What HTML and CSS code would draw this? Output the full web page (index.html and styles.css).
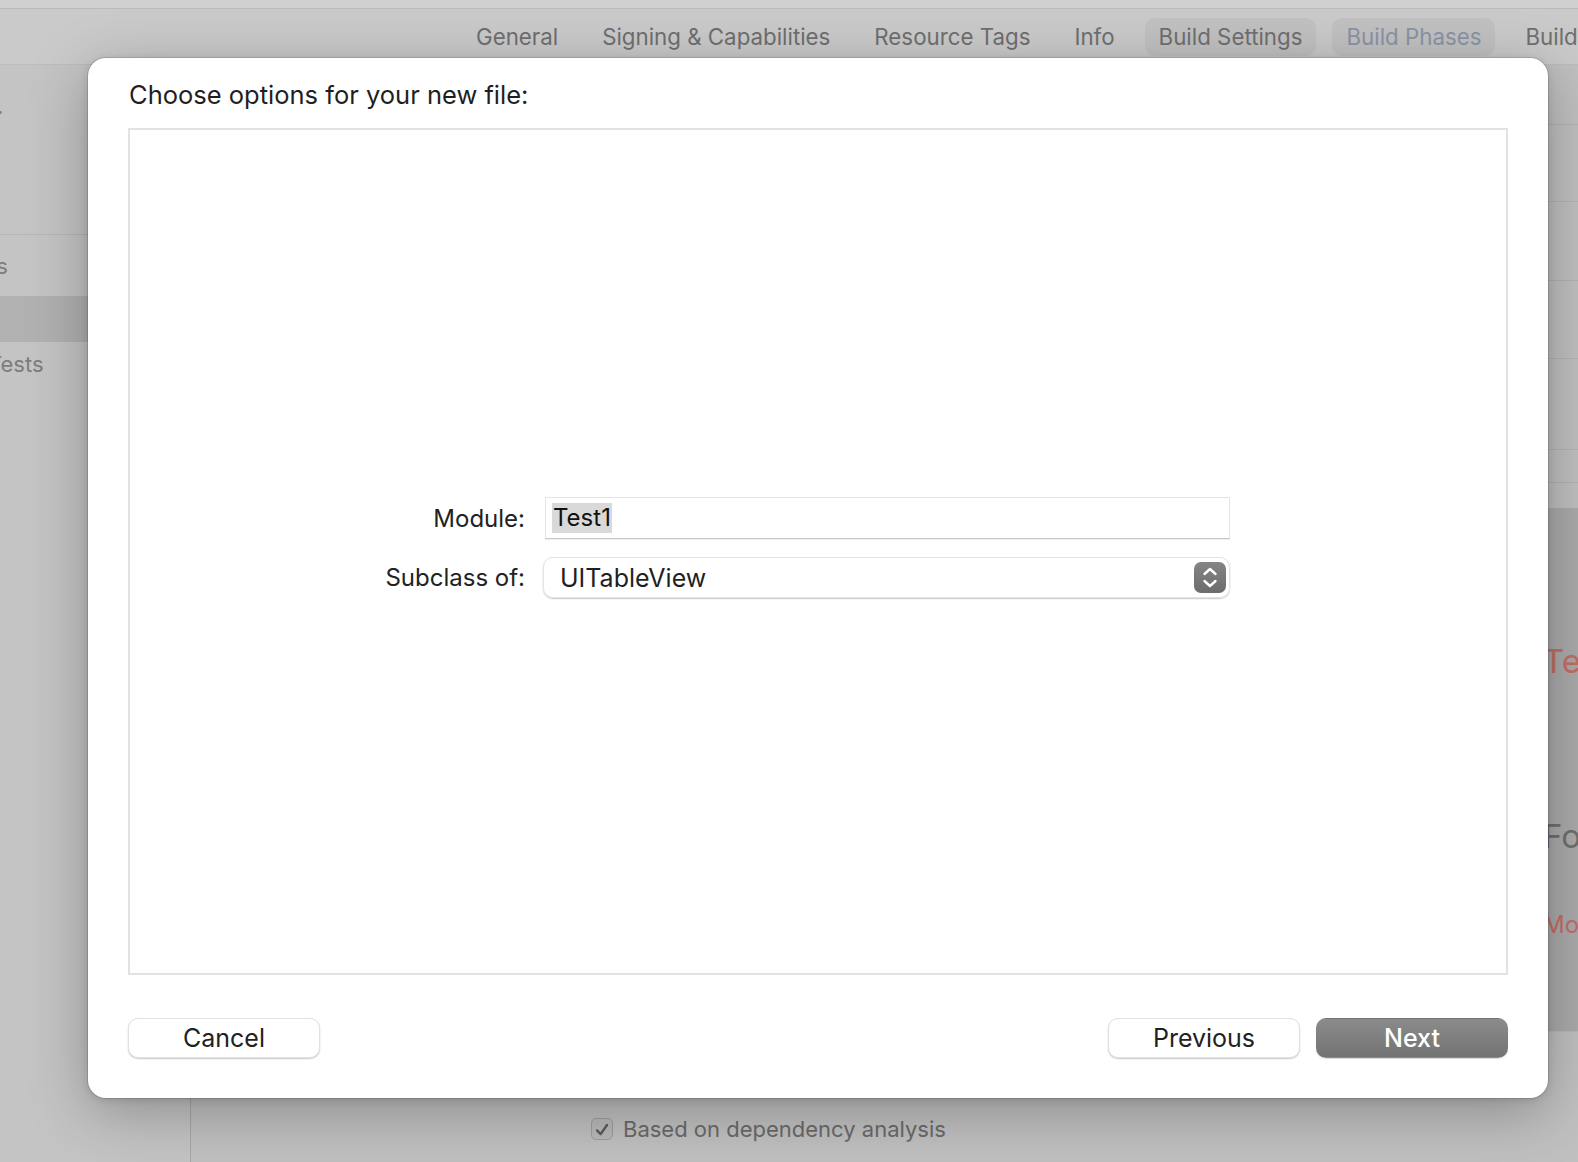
FILE: index.html
```html
<!DOCTYPE html>
<html lang="en">
<head>
<meta charset="utf-8">
<title>Choose options for your new file</title>
<link rel="stylesheet" href="styles.css">
</head>
<body>
<div class="app">
  <div class="titlebar"></div>
  <header class="toolbar">
    <nav class="tabs">
      <span class="tab">General</span>
      <span class="tab">Signing &amp; Capabilities</span>
      <span class="tab">Resource Tags</span>
      <span class="tab">Info</span>
      <span class="tab pill">Build Settings</span>
      <span class="tab pill active">Build Phases</span>
      <span class="tab">Build Rules</span>
    </nav>
  </header>
  <div class="workspace">
    <aside class="sidebar">
      <div class="side-group"><span class="side-text dot">.</span></div>
      <div class="side-row"><span class="side-text cut-s">Targets</span></div>
      <div class="side-row selected"></div>
      <div class="side-row short"><span class="side-text cut-t">Tests</span></div>
    </aside>
    <main class="main">
      <div class="phase-row h60"></div>
      <div class="phase-row h77"></div>
      <div class="phase-row h79"></div>
      <div class="phase-row h78"></div>
      <div class="phase-row h91"></div>
      <div class="phase-row h33"></div>
      <div class="phase-gap"></div>
      <div class="phase-block">
        <div class="block-line red big">Test1</div>
        <div class="block-line grey big">Foundation</div>
        <div class="block-line red small">Module</div>
      </div>
      <div class="check-row">
        <span class="checkbox">
          <svg viewBox="0 0 22 22" width="22" height="22"><path d="M5.5 11.5 L9.5 15.5 L16.5 5.5" fill="none" stroke="#5a5a5a" stroke-width="2.6" stroke-linecap="round" stroke-linejoin="round"/></svg>
        </span>
        <span class="check-label">Based on dependency analysis</span>
      </div>
    </main>
  </div>

  <section class="sheet">
    <h1 class="sheet-title">Choose options for your new file:</h1>
    <div class="options-box">
      <div class="form">
        <label class="form-label">Module:</label>
        <div class="text-field"><span class="selection">Test1</span></div>
        <label class="form-label">Subclass of:</label>
        <div class="popup">
          <span class="popup-value">UITableView</span>
          <span class="stepper">
            <svg viewBox="0 0 32 31" width="32" height="31">
              <defs>
                <linearGradient id="sg" x1="0" y1="0" x2="0" y2="1">
                  <stop offset="0" stop-color="#858585"/>
                  <stop offset="1" stop-color="#6c6c6c"/>
                </linearGradient>
              </defs>
              <rect x="0" y="0" width="32" height="31" rx="7" fill="url(#sg)"/>
              <path d="M10.5 12 L16 7 L21.5 12" fill="none" stroke="#fff" stroke-width="2.4" stroke-linecap="round" stroke-linejoin="round"/>
              <path d="M10.5 19 L16 24 L21.5 19" fill="none" stroke="#fff" stroke-width="2.4" stroke-linecap="round" stroke-linejoin="round"/>
            </svg>
          </span>
        </div>
      </div>
    </div>
    <div class="sheet-buttons">
      <button class="btn">Cancel</button>
      <div class="btn-group">
        <button class="btn">Previous</button>
        <button class="btn primary">Next</button>
      </div>
    </div>
  </section>
</div>
</body>
</html>
```

FILE: styles.css
```css
* { box-sizing: border-box; }
html, body { margin: 0; padding: 0; }
body {
  font-family: Inter, "Noto Sans", sans-serif;
  background: #c1c1c1;
  overflow: hidden;
}
.app {
  position: relative;
  width: 1578px;
  height: 1162px;
  display: flex;
  flex-direction: column;
  background: linear-gradient(180deg, #c6c6c6 0%, #bdbdbd 100%);
  overflow: hidden;
}
.titlebar {
  height: 9px;
  background: #d0d0d0;
  border-bottom: 1px solid #bababa;
  flex: none;
}
.toolbar {
  height: 56px;
  flex: none;
  background: #cacaca;
  border-bottom: 1px solid #bcbcbc;
  display: flex;
  align-items: flex-start;
  padding-left: 462px;
  padding-top: 9px;
}
.tabs {
  display: flex;
  gap: 16px;
  white-space: nowrap;
}
.tab {
  font-size: 22.3px;
  color: #6f6f6f;
  height: 38px;
  line-height: 38px;
  padding: 0 14px;
  border-radius: 10px;
}
.tab.pill { background: #c1c1c1; }
.tab.active { color: #8a93a6; }

.workspace {
  flex: 1;
  display: flex;
  min-height: 0;
}
.sidebar {
  width: 191px;
  flex: none;
  border-right: 1px solid #a8a8a8;
  background: #c4c4c4;
  display: flex;
  flex-direction: column;
}
.side-group {
  height: 170px;
  border-bottom: 1px solid #b6b6b6;
  padding-top: 28px;
}
.side-row {
  height: 61px;
  display: flex;
  align-items: center;
}
.side-row.selected {
  height: 46px;
  background: #b1b1b1;
}
.side-row.short { height: 43px; }
.side-text {
  font-size: 22px;
  color: #7d7d7d;
  white-space: nowrap;
}
.dot { display: block; margin-left: -3px; }
.cut-s { margin-left: -70px; }
.cut-t { margin-left: -12px; }

.main {
  flex: 1;
  display: flex;
  flex-direction: column;
  background: #c0c0c0;
}
.phase-row { border-bottom: 1px solid #b3b3b3; flex: none; }
.h60 { height: 60px; }
.h77 { height: 77px; }
.h79 { height: 79px; }
.h78 { height: 78px; }
.h91 { height: 91px; }
.h33 { height: 33px; }
.phase-gap { height: 25px; flex: none; }
.phase-block {
  height: 524px;
  flex: none;
  background: #ababab;
  border-bottom: 1px solid #b8b8b8;
  padding-left: 1352px;
  padding-top: 133px;
  display: flex;
  flex-direction: column;
}
.block-line { white-space: nowrap; }
.block-line.big { font-size: 33px; height: 40px; line-height: 40px; }
.block-line.small { font-size: 24px; height: 30px; line-height: 30px; }
.block-line.red { color: #c46d66; }
.block-line.grey { color: #6f6f6f; margin-top: 135px; }
.block-line.small { margin-top: 54px; }

.check-row {
  display: flex;
  align-items: center;
  gap: 10px;
  padding-left: 400px;
  margin-top: 84px;
}
.checkbox {
  width: 22px;
  height: 22px;
  border: 1px solid #9d9d9d;
  border-radius: 5px;
  background: #b9b9b9;
  display: flex;
}
.check-label {
  font-size: 22px;
  color: #6a6a6a;
}

/* Sheet dialog overlaid on the window */
.sheet {
  position: absolute;
  left: 88px;
  top: 58px;
  width: 1460px;
  height: 1040px;
  background: #ffffff;
  border-radius: 18px;
  box-shadow: 0 0 0 1px rgba(0,0,0,0.12), 0 14px 60px rgba(0,0,0,0.28), 0 2px 8px rgba(0,0,0,0.12);
  padding: 21px 40px 40px;
  display: flex;
  flex-direction: column;
}
.sheet-title {
  margin: 0;
  font-size: 25.5px;
  font-weight: 400;
  line-height: 32px;
  color: #1f1f1f;
  padding-left: 1px;
}
.options-box {
  margin-top: 17px;
  height: 847px;
  border: 2px solid #e2e2e2;
  display: flex;
  align-items: center;
  padding-bottom: 8px;
}
.form {
  display: grid;
  grid-template-columns: 395px 685px;
  column-gap: 20px;
  row-gap: 18px;
  align-items: center;
}
.form-label {
  text-align: right;
  font-size: 24px;
  color: #222;
}
.text-field {
  height: 42px;
  border: 1px solid #e4e4e4;
  border-bottom-color: #c6c6c6;
  box-shadow: 0 1px 0 rgba(0,0,0,0.06);
  padding-left: 6px;
  display: flex;
  align-items: center;
}
.selection {
  background: #d9d9d9;
  font-size: 24px;
  line-height: 30px;
  color: #111;
  padding: 0 1px;
}
.popup {
  height: 41px;
  border: 1px solid #e3e3e3;
  border-radius: 10px;
  box-shadow: 0 1px 1.5px rgba(0,0,0,0.22);
  display: flex;
  align-items: center;
  justify-content: space-between;
  padding: 0 3px 0 16px;
  margin-left: -2px;
}
.popup-value {
  font-size: 25px;
  color: #1f1f1f;
}
.stepper { display: flex; }

.sheet-buttons {
  margin-top: 43px;
  display: flex;
  justify-content: space-between;
}
.btn-group { display: flex; gap: 16px; }
.btn {
  width: 192px;
  height: 40px;
  border-radius: 10px;
  border: 1px solid #e2e2e2;
  background: #ffffff;
  box-shadow: 0 1px 1.5px rgba(0,0,0,0.22);
  font-family: Inter, "Noto Sans", sans-serif;
  font-size: 25px;
  color: #222;
  padding: 0;
  line-height: 38px;
}
.btn.primary {
  border-color: transparent;
  background: linear-gradient(180deg, #8b8b8b 0%, #737373 100%);
  color: #fff;
  font-weight: 500;
  box-shadow: 0 1px 1px rgba(0,0,0,0.15);
}
```
